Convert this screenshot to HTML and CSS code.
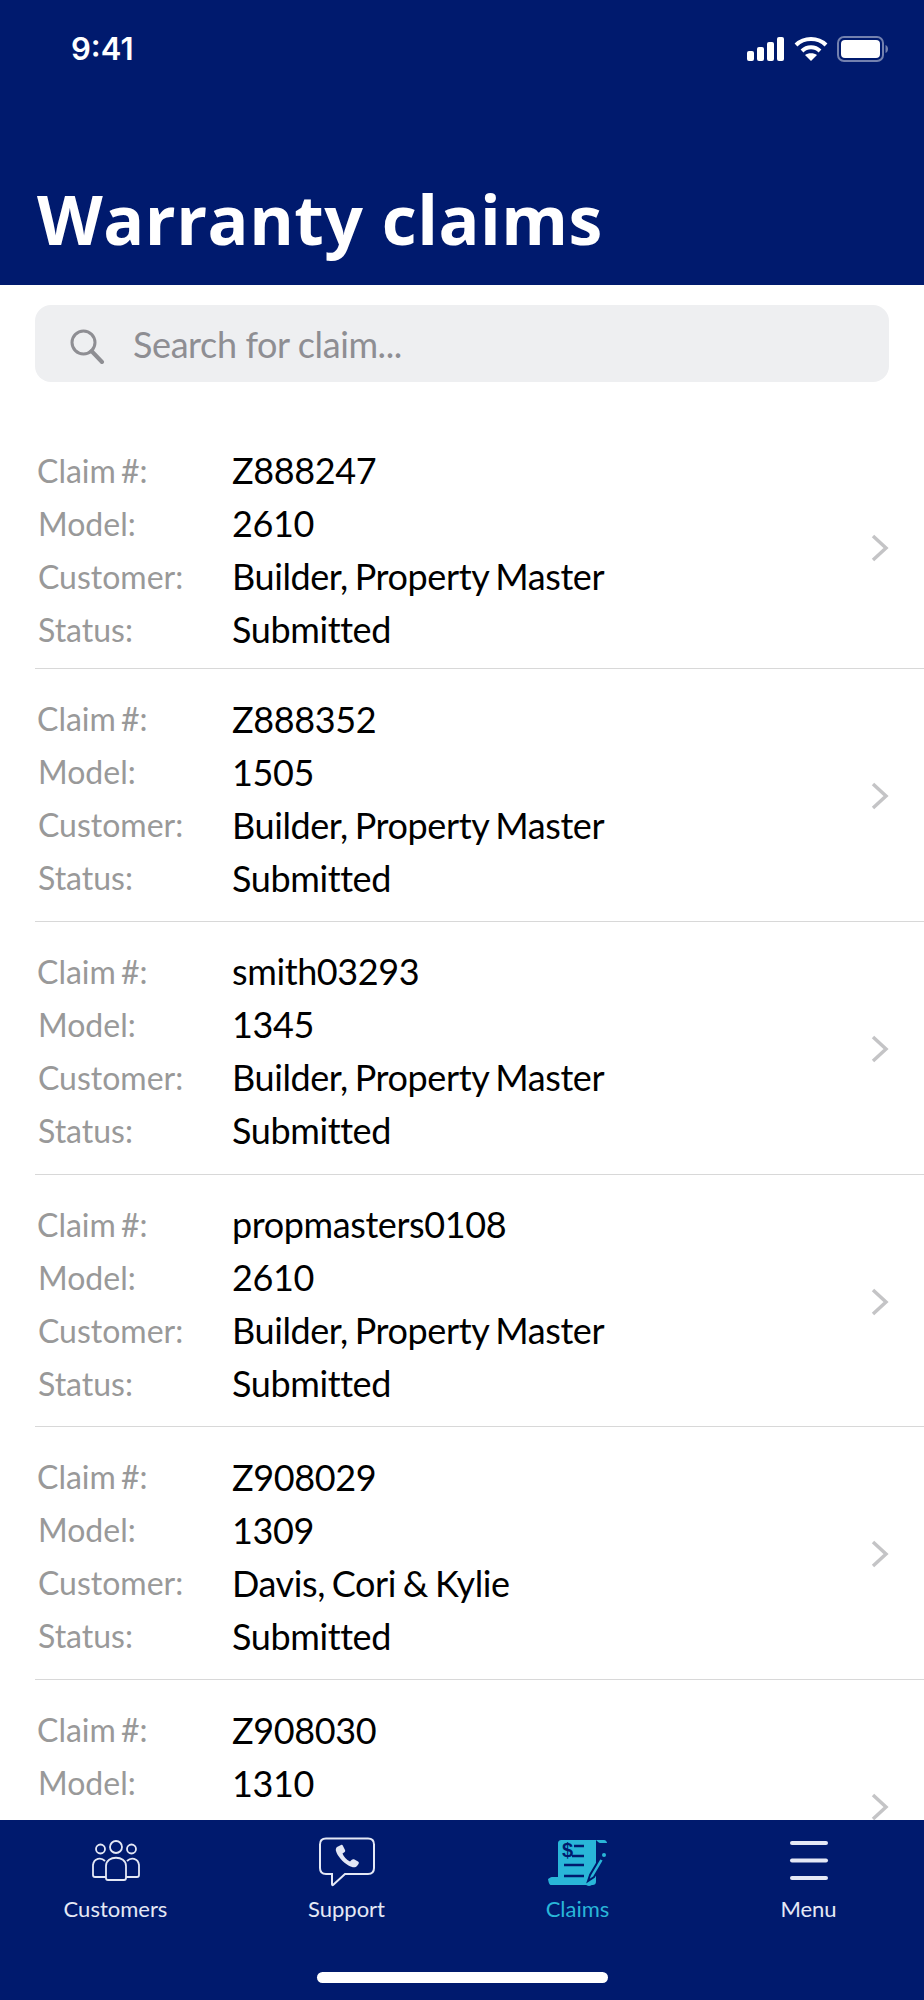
FILE: index.html
```html
<!DOCTYPE html>
<html lang="en">
<head>
  <meta charset="UTF-8">
  <meta name="viewport" content="width=device-width, initial-scale=1.0">
  <title>Warranty claims</title>
  <link rel="stylesheet" href="styles.css">
</head>
<body>
  <div class="page">
    <header class="top">
      <div class="status">
        <span class="time">9:41</span>
        <div class="status-icons">
          <svg width="38" height="24" viewBox="0 0 38 24"><g fill="#fff"><rect x="0" y="14" width="7" height="10" rx="2"/><rect x="10" y="10" width="7" height="14" rx="2"/><rect x="20" y="5" width="7" height="19" rx="2"/><rect x="30" y="0" width="7" height="24" rx="2"/></g></svg>
          <svg width="34" height="26" viewBox="0 0 34 26"><g fill="none" stroke="#fff" stroke-width="4"><path d="M2 9 C10 1 24 1 32 9"/><path d="M8 15 C13 10 21 10 26 15"/></g><path d="M11 19 C14 16.500 20 16.500 23 19 L17 25 Z" fill="#fff"/></svg>
          <svg width="52" height="26" viewBox="0 0 52 26"><rect x="1" y="1" width="45" height="24" rx="6" fill="none" stroke="#fff" stroke-opacity=".45" stroke-width="2"/><rect x="4" y="4" width="39" height="18" rx="4" fill="#fff"/><path d="M48.500 9 C50.500 10 51 11.500 51 13 C51 14.500 50.500 16 48.500 17 Z" fill="#fff" fill-opacity=".45"/></svg>
        </div>
      </div>
      <h1>Warranty claims</h1>
    </header>

    <div class="search-wrap">
      <div class="search">
        <svg class="search-icon" width="36" height="36" viewBox="0 0 36 36"><g fill="none" stroke="#8e8e93" stroke-width="3"><circle cx="14.500" cy="14.500" r="11.500"/><path d="M22.500 23 L33 34" stroke-width="4" stroke-linecap="round"/></g></svg>
        <span>Search for claim...</span>
      </div>
    </div>

    <main class="list">
      <div class="claim">
        <dl>
          <dt>Claim #:</dt><dd>Z888247</dd>
          <dt>Model:</dt><dd>2610</dd>
          <dt>Customer:</dt><dd>Builder, Property Master</dd>
          <dt>Status:</dt><dd>Submitted</dd>
        </dl>
        <svg class="chev" width="18" height="28" viewBox="0 0 18 28"><path d="M2 2 L15 14 L2 26" fill="none" stroke="#c4c4c6" stroke-width="3.500"/></svg>
      </div>
      <div class="claim">
        <dl>
          <dt>Claim #:</dt><dd>Z888352</dd>
          <dt>Model:</dt><dd>1505</dd>
          <dt>Customer:</dt><dd>Builder, Property Master</dd>
          <dt>Status:</dt><dd>Submitted</dd>
        </dl>
        <svg class="chev" width="18" height="28" viewBox="0 0 18 28"><path d="M2 2 L15 14 L2 26" fill="none" stroke="#c4c4c6" stroke-width="3.500"/></svg>
      </div>
      <div class="claim">
        <dl>
          <dt>Claim #:</dt><dd>smith03293</dd>
          <dt>Model:</dt><dd>1345</dd>
          <dt>Customer:</dt><dd>Builder, Property Master</dd>
          <dt>Status:</dt><dd>Submitted</dd>
        </dl>
        <svg class="chev" width="18" height="28" viewBox="0 0 18 28"><path d="M2 2 L15 14 L2 26" fill="none" stroke="#c4c4c6" stroke-width="3.500"/></svg>
      </div>
      <div class="claim">
        <dl>
          <dt>Claim #:</dt><dd>propmasters0108</dd>
          <dt>Model:</dt><dd>2610</dd>
          <dt>Customer:</dt><dd>Builder, Property Master</dd>
          <dt>Status:</dt><dd>Submitted</dd>
        </dl>
        <svg class="chev" width="18" height="28" viewBox="0 0 18 28"><path d="M2 2 L15 14 L2 26" fill="none" stroke="#c4c4c6" stroke-width="3.500"/></svg>
      </div>
      <div class="claim">
        <dl>
          <dt>Claim #:</dt><dd>Z908029</dd>
          <dt>Model:</dt><dd>1309</dd>
          <dt>Customer:</dt><dd>Davis, Cori &amp; Kylie</dd>
          <dt>Status:</dt><dd>Submitted</dd>
        </dl>
        <svg class="chev" width="18" height="28" viewBox="0 0 18 28"><path d="M2 2 L15 14 L2 26" fill="none" stroke="#c4c4c6" stroke-width="3.500"/></svg>
      </div>
      <div class="claim">
        <dl>
          <dt>Claim #:</dt><dd>Z908030</dd>
          <dt>Model:</dt><dd>1310</dd>
        </dl>
        <svg class="chev" width="18" height="28" viewBox="0 0 18 28"><path d="M2 2 L15 14 L2 26" fill="none" stroke="#c4c4c6" stroke-width="3.500"/></svg>
      </div>
    </main>

    <footer class="tabbar">
      <nav class="tabs">
        <a class="tab">
          <svg width="60" height="50" viewBox="0 0 60 50"><g fill="none" stroke="#e4e8f5" stroke-width="1.800"><circle cx="30" cy="10" r="6"/><circle cx="14.500" cy="12" r="4.500"/><circle cx="45.500" cy="12" r="4.500"/><path d="M19 24 C15 20 8 21 7 28 L7 38 C7 39.500 8 40 9 40 L20 40"/><path d="M41 24 C45 20 52 21 53 28 L53 38 C53 39.500 52 40 51 40 L40 40"/><path d="M20 29 C20 18 40 18 40 29 L40 41 C40 42 39 43 38 43 L22 43 C21 43 20 42 20 41 Z"/></g></svg>
          <span>Customers</span>
        </a>
        <a class="tab">
          <svg width="60" height="50" viewBox="0 0 60 50"><path d="M9 1.500 L51 1.500 C55 1.500 57 3.500 57 7.500 L57 31 C57 35 55 37 51 37 L28 37 L16 48 C15.500 48.500 15 48 15 47 L15 37 L9 37 C5 37 3 35 3 31 L3 7.500 C3 3.500 5 1.500 9 1.500 Z" fill="none" stroke="#e4e8f5" stroke-width="2"/><path d="M20 10 L24 8 C25 7.500 25.500 8 26 9 L28 13 C28.500 14 28 15 27 15.500 L25.500 16.500 C26.500 19.500 29.500 23 33 24.500 L34.500 23 C35.500 22 36.500 22 37.500 22.500 L41 24.500 C42 25 42 26 41.500 27 L40 29 C38.500 31 35 30.500 31.500 28.500 C25.500 25 20.500 19 19 14 C18.500 12.500 19 11 20 10 Z" fill="#e4e8f5"/></svg>
          <span>Support</span>
        </a>
        <a class="tab active">
          <svg width="60" height="50" viewBox="0 0 60 50"><path d="M14 3 C11 3 10 4 10 7 L10 40 L4 40 C2 40 2 41 0 42 C1 48 2 48 4 48 L44 48 C47 48 48 47 48 44 L48 3 Z" fill="#29b6d8"/><path d="M48 3 L56 3 C58 3 59 5 59 6 L52 6 C51 6 50 5 48 3 Z" fill="#29b6d8"/><circle cx="41" cy="44" r="5" fill="#29b6d8"/><g fill="none" stroke="#001a6e" stroke-width="2.500"><path d="M26 9 L36 9"/><path d="M24 19 L36 19"/><path d="M16 28 L36 28"/><path d="M16 39 L36 39"/></g><path d="M42 38 L40 44 L46 40 L56 23 L52 21 Z" fill="#29b6d8" stroke="#001a6e" stroke-width="2"/><circle cx="56" cy="18" r="2" fill="#29b6d8"/><text class="dollar" x="14" y="20">$</text></svg>
          <span>Claims</span>
        </a>
        <a class="tab">
          <svg width="60" height="50" viewBox="0 0 60 50"><g stroke="#e4e8f5" stroke-width="4" stroke-linecap="round"><path d="M13 6 L47 6"/><path d="M13 23.500 L47 23.500"/><path d="M13 41 L47 41"/></g></svg>
          <span>Menu</span>
        </a>
      </nav>
      <div class="home-bar"></div>
    </footer>
  </div>
</body>
</html>
```

FILE: styles.css
```css
* {
  box-sizing: border-box;
}

body {
  margin: 0;
  font-family: Lato, sans-serif;
  background: #fff;
}

.page {
  display: flex;
  flex-direction: column;
  height: 2000px;
  overflow: hidden;
}

/* header */
.top {
  height: 285px;
  flex-shrink: 0;
  background: #001a6e;
  color: #fff;
  display: flex;
  flex-direction: column;
}

.status {
  display: flex;
  justify-content: space-between;
  align-items: center;
  padding: 33px 35px 0 71px;
}

.time {
  font-family: Inter, sans-serif;
  font-size: 31px;
  font-weight: 600;
  line-height: 32px;
}

.status-icons {
  display: flex;
  align-items: center;
  gap: 9px;
}

h1 {
  margin: 112px 0 0 37px;
  font-family: "Open Sans", sans-serif;
  font-size: 68px;
  line-height: 84px;
  font-weight: 700;
  letter-spacing: 0.5px;
}

/* search */
.search-wrap {
  flex-shrink: 0;
  padding: 20px 35px 0;
}

.search {
  height: 77px;
  background: #eeeff1;
  border-radius: 16px;
  display: flex;
  align-items: center;
  gap: 28px;
  padding-left: 34px;
  color: #8e8e93;
  font-size: 36px;
  letter-spacing: -0.4px;
}

.search-icon {
  margin-top: 4px;
}

/* list */
.list {
  flex: 1;
  min-height: 0;
  overflow: hidden;
  padding: 38.500px 0 0 35px;
}

.claim {
  height: 252.750px;
  display: flex;
  align-items: flex-start;
  padding: 23px 35px 0 2px;
  border-bottom: 1px solid #d8d8d8;
}

.claim:first-child {
  height: 248.500px;
}

dl {
  flex: 1;
  margin: 0;
  display: grid;
  grid-template-columns: 195px 1fr;
  grid-auto-rows: 53px;
  align-items: center;
}

dt {
  color: #999;
  font-size: 32px;
  padding-left: 1px;
  word-spacing: -3px;
}

dt:first-of-type {
  padding-left: 0;
}

dd {
  margin: 0;
  color: #000;
  font-size: 36px;
  letter-spacing: -0.4px;
  word-spacing: -2px;
}

.chev {
  margin-top: 90px;
}

/* bottom tabs */
.tabbar {
  height: 180px;
  flex-shrink: 0;
  background: #001a6e;
  display: flex;
  flex-direction: column;
  justify-content: space-between;
  padding-bottom: 17px;
}

.tabs {
  display: grid;
  grid-template-columns: repeat(4, 1fr);
  padding-top: 17px;
}

.tab {
  display: flex;
  flex-direction: column;
  align-items: center;
  gap: 8px;
  color: #e4e8f5;
  font-size: 22px;
}

.tab.active {
  color: #29b6d8;
}

.dollar {
  font-family: "Liberation Sans", sans-serif;
  font-size: 20px;
  font-weight: 700;
  fill: #001a6e;
}

.home-bar {
  align-self: center;
  width: 291px;
  height: 11px;
  border-radius: 6px;
  background: #fff;
}
```
